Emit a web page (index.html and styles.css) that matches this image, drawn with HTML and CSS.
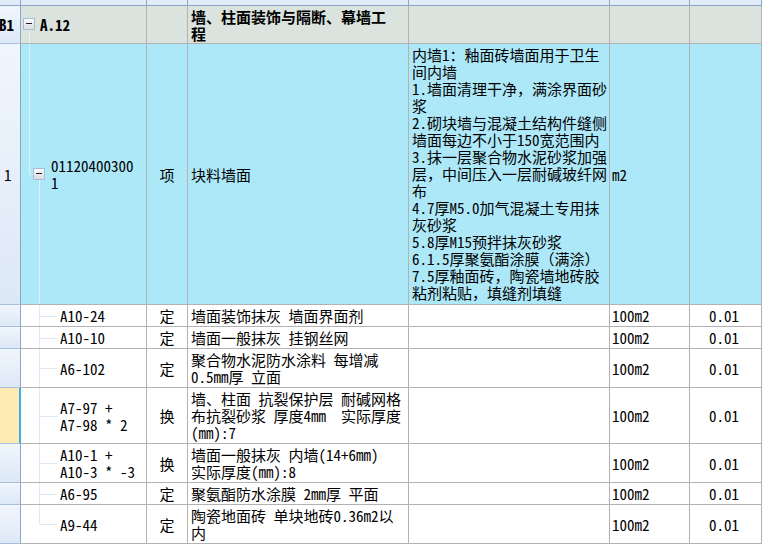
FILE: index.html
```html
<!DOCTYPE html>
<html lang="zh-CN">
<head>
<meta charset="utf-8">
<title>清单</title>
<link rel="stylesheet" href="styles.css">
</head>
<body>
<div class="grid">
  <div class="row r-top">
    <div class="c hd"></div><div class="c"></div><div class="c"></div><div class="c"></div><div class="c"></div><div class="c"></div><div class="c"></div>
  </div>
  <div class="row r-sec">
    <div class="c hd b1">B1</div>
    <div class="c code sec-code"><span class="box"></span><span class="bold">A.12</span></div>
    <div class="c"></div>
    <div class="c name bold">墙、柱面装饰与隔断、幕墙工<br>程</div>
    <div class="c"></div>
    <div class="c"></div>
    <div class="c"></div>
  </div>
  <div class="row r-item">
    <div class="c hd">1</div>
    <div class="c code item-code"><span class="box"></span><span>01120400300<br>1</span></div>
    <div class="c unit">项</div>
    <div class="c name">块料墙面</div>
    <div class="c desc">内墙1：釉面砖墙面用于卫生<br>间内墙<br>1.墙面清理干净，满涂界面砂<br>浆<br>2.砌块墙与混凝土结构件缝侧<br>墙面每边不小于150宽范围内<br>3.抹一层聚合物水泥砂浆加强<br>层，中间压入一层耐碱玻纤网<br>布<br>4.7厚M5.0加气混凝土专用抹<br>灰砂浆<br>5.8厚M15预拌抹灰砂浆<br>6.1.5厚聚氨酯涂膜（满涂）<br>7.5厚釉面砖，陶瓷墙地砖胶<br>粘剂粘贴，填缝剂填缝</div>
    <div class="c mu">m2</div>
    <div class="c"></div>
  </div>
  <div class="row h1">
    <div class="c hd"></div>
    <div class="c code child">A10-24</div>
    <div class="c unit">定</div>
    <div class="c name">墙面装饰抹灰 墙面界面剂</div>
    <div class="c"></div>
    <div class="c mu">100m2</div>
    <div class="c qty">0.01</div>
  </div>
  <div class="row h1">
    <div class="c hd"></div>
    <div class="c code child">A10-10</div>
    <div class="c unit">定</div>
    <div class="c name">墙面一般抹灰 挂钢丝网</div>
    <div class="c"></div>
    <div class="c mu">100m2</div>
    <div class="c qty">0.01</div>
  </div>
  <div class="row h2">
    <div class="c hd"></div>
    <div class="c code child">A6-102</div>
    <div class="c unit">定</div>
    <div class="c name">聚合物水泥防水涂料 每增减<br>0.5mm厚 立面</div>
    <div class="c"></div>
    <div class="c mu">100m2</div>
    <div class="c qty">0.01</div>
  </div>
  <div class="row h3">
    <div class="c hd sel"></div>
    <div class="c code child">A7-97 +<br>A7-98 * 2</div>
    <div class="c unit">换</div>
    <div class="c name">墙、柱面 抗裂保护层 耐碱网格<br>布抗裂砂浆 厚度4mm  实际厚度<br>(mm):7</div>
    <div class="c"></div>
    <div class="c mu">100m2</div>
    <div class="c qty">0.01</div>
  </div>
  <div class="row h2">
    <div class="c hd"></div>
    <div class="c code child">A10-1 +<br>A10-3 * -3</div>
    <div class="c unit">换</div>
    <div class="c name">墙面一般抹灰 内墙(14+6mm)<br>实际厚度(mm):8</div>
    <div class="c"></div>
    <div class="c mu">100m2</div>
    <div class="c qty">0.01</div>
  </div>
  <div class="row h1">
    <div class="c hd"></div>
    <div class="c code child">A6-95</div>
    <div class="c unit">定</div>
    <div class="c name">聚氨酯防水涂膜 2mm厚 平面</div>
    <div class="c"></div>
    <div class="c mu">100m2</div>
    <div class="c qty">0.01</div>
  </div>
  <div class="row h2">
    <div class="c hd"></div>
    <div class="c code child last">A9-44</div>
    <div class="c unit">定</div>
    <div class="c name">陶瓷地面砖 单块地砖0.36m2以<br>内</div>
    <div class="c"></div>
    <div class="c mu">100m2</div>
    <div class="c qty">0.01</div>
  </div>
</div>
</body>
</html>
```
FILE: styles.css
```css
html, body {
  margin: 0;
  padding: 0;
  background: #ffffff;
}
body {
  width: 762px;
  height: 551px;
  overflow: hidden;
  font-family: "Noto Sans Mono CJK SC", "Noto Sans CJK SC", sans-serif;
  font-size: 15px;
  line-height: 17px;
  color: #000;
}
.grid {
  display: flex;
  flex-direction: column;
}
.row {
  display: grid;
  grid-template-columns: 21px 126px 41px 221px 201px 80px 72px;
}
.c {
  box-sizing: border-box;
  border-right: 1px solid #b2b2b2;
  border-bottom: 1px solid #b2b2b2;
  display: flex;
  align-items: center;
  white-space: pre;
  overflow: hidden;
  position: relative;
}
.hd {
  background: linear-gradient(to bottom, #f0f6fd, #dde8f6);
  border-right: 1px solid #8ca6c6;
  border-bottom: 1px solid #a9bedb;
  padding-left: 4px;
}
.hd.sel {
  background: #feebb3;
  border-right: 2px solid #3db2e2;
}
.b1 {
  font-weight: bold;
  padding-left: 0;
  text-indent: -1px;
}
.r-top { height: 6px; }
.r-top .c {
  background: #e2ecf8;
  border-right-color: #8ca6c6;
  border-bottom-color: #8ca6c6;
}
.r-sec { height: 38px; background: #dae3de; }
.r-item { height: 261px; background: #ade8f9; }
.h1 { height: 22px; }
.h2 { height: 39px; }
.h3 { height: 56px; }
.bold { font-weight: bold; }
.name {
  padding-left: 3px;
}
.desc {
  padding-left: 3px;
  align-items: flex-start;
  padding-top: 2px;
}
.unit { justify-content: center; }
.mu { padding-left: 2px; }
.qty { justify-content: center; padding-right: 3px; }

/* tree column */
.box {
  box-sizing: border-box;
  width: 12px;
  height: 12px;
  border: 1px solid #a9bddb;
  background: linear-gradient(to bottom, #fafafa, #dcdcdc);
  position: relative;
  flex: none;
}
.box::after {
  content: "";
  position: absolute;
  left: 2px;
  top: 4px;
  width: 6px;
  height: 1px;
  background: #222;
}
.sec-code .box { margin-left: 2px; margin-right: 5px; margin-top: -1px; }
.sec-code::before {
  content: "";
  position: absolute;
  left: 8px;
  top: 25px;
  bottom: 0;
  width: 1px;
  background: #eef3f0;
}
.item-code .box { margin-left: 12px; margin-right: 6px; }
.item-code::before {
  content: "";
  position: absolute;
  left: 8px;
  top: 0;
  height: 130px;
  width: 4px;
  border-left: 1px solid #d6f3fc;
  border-bottom: 1px solid #d6f3fc;
}
.item-code::after {
  content: "";
  position: absolute;
  left: 18px;
  top: 136px;
  bottom: 0;
  width: 1px;
  background: #d6f3fc;
}
.child { padding-left: 39px; }
.child::before {
  content: "";
  position: absolute;
  left: 18px;
  top: 0;
  bottom: 0;
  width: 1px;
  background: #dde9f5;
}
.child::after {
  content: "";
  position: absolute;
  left: 19px;
  top: 50%;
  width: 17px;
  height: 1px;
  background: #dde9f5;
}
.child.last::before {
  bottom: auto;
  height: 50%;
}
```
